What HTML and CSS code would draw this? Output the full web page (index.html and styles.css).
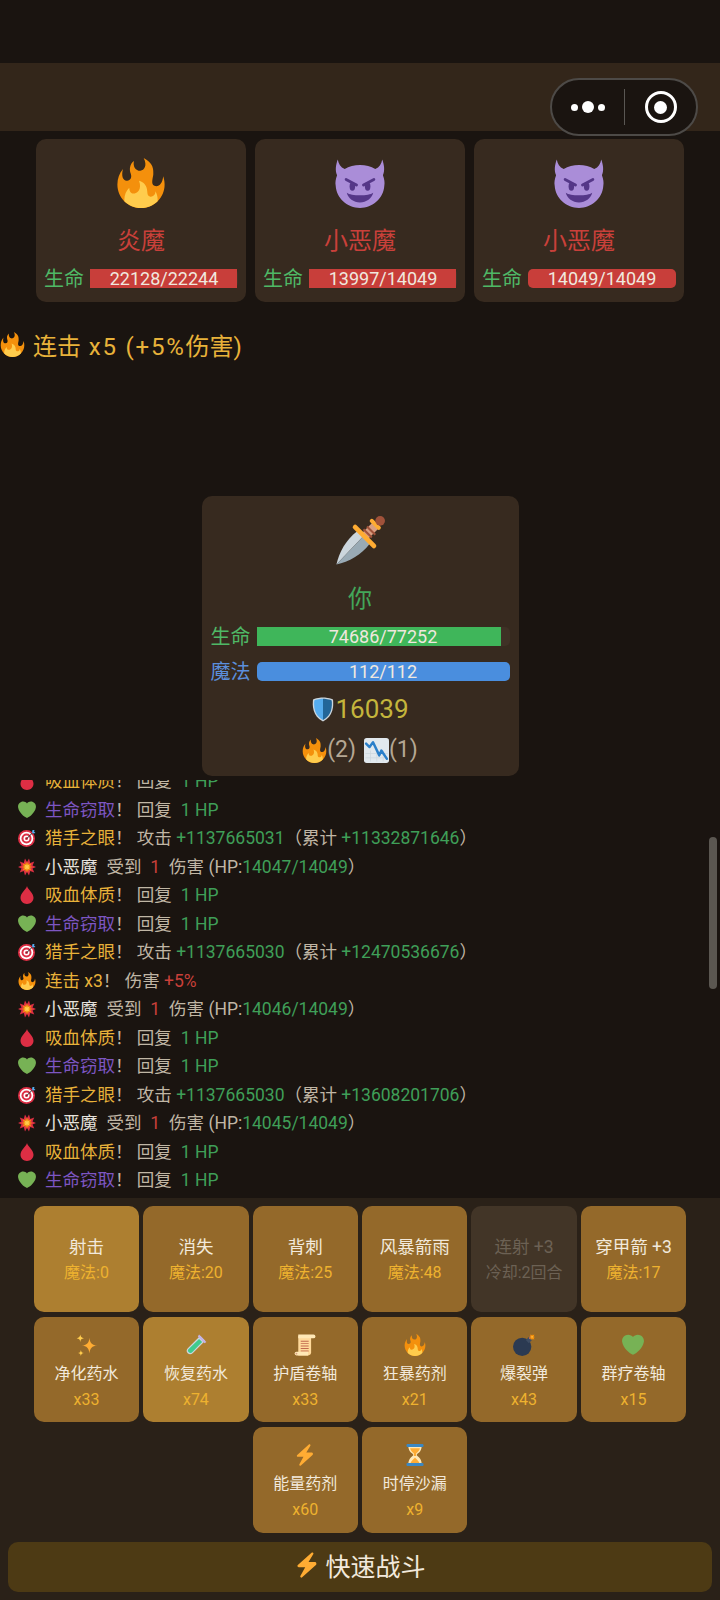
FILE: index.html
```html
<!DOCTYPE html>
<html lang="zh-CN">
<head>
    <meta charset="UTF-8">
    <meta name="viewport" content="width=device-width, initial-scale=1.0">
    <title>战斗</title>
    <link rel="stylesheet" href="styles.css">
</head>
<body>
    <!-- shared emoji drawings -->
    <svg class="defs" width="0" height="0">
        <symbol id="fire" viewBox="0 0 36 36">
            <path fill="#F4900C" d="M35 19c0-2.062-.367-4.039-1.040-5.868-.46 5.389-3.333 8.157-6.335 6.868-2.812-1.208-.917-5.917-.777-8.164.236-3.809-.012-8.169-6.931-11.794 2.875 5.500.333 8.917-2.333 9.125-2.958.231-5.667-2.542-4.667-7.042-3.238 2.386-3.332 6.402-2.333 9 1.042 2.708-.042 4.958-2.583 5.208-2.840.28-4.418-3.041-2.963-8.333C2.520 10.965 1 14.805 1 19c0 9.389 7.611 17 17 17s17-7.611 17-17z"/>
            <path fill="#FFCC4D" d="M28.394 23.999c.148 3.084-2.561 4.293-4.019 3.709-2.106-.843-1.541-2.291-2.083-5.291s-2.625-5.083-5.708-6c2.250 6.333-1.247 8.667-3.080 9.084-1.872.426-3.753-.001-3.968-4.007C7.352 23.668 6 26.676 6 30c0 .368.023.73.055 1.090C9.125 34.124 13.342 36 18 36s8.875-1.876 11.945-4.910c.032-.36.055-.722.055-1.090 0-2.187-.584-4.236-1.606-6.001z"/>
        </symbol>
        <symbol id="imp" viewBox="0 0 36 36">
            <path fill="#AA8DD8" d="M2 1c.5 3 2 5.500 5 7 3-2 7-3 11-3s8 1 11 3c3-1.500 4.500-4 5-7 1.500 4 2 8 .5 11.500 1 2.500 1.500 5.500 1 7.500-.5 9-8.500 16-17.500 16S1 29 .5 20c-.5-2 0-5 1-7.500C0 9 .5 5 2 1z"/>
            <path fill="none" stroke="#553788" stroke-width="2" stroke-linecap="round" d="M8 15.500l7.500 4M28 15.500l-7.500 4"/>
            <ellipse fill="#553788" cx="12.500" cy="20.500" rx="2" ry="3"/>
            <ellipse fill="#553788" cx="23.500" cy="20.500" rx="2" ry="3"/>
            <path fill="#553788" d="M8.500 25c3 2.500 16 2.500 19 0-.8 4-5 7-9.500 7s-8.700-3-9.500-7z"/>
        </symbol>
        <symbol id="dagger" viewBox="0 0 36 36">
            <path fill="#CCD6DD" d="M1 35C3 26 8 17 16 11l4 4z"/>
            <path fill="#99AAB5" d="M1 35C10 33 19 28 25 20l-5-5z"/>
            <path fill="none" stroke="#D99E82" stroke-width="6" d="M22 14l7-7"/>
            <path fill="none" stroke="#A0523A" stroke-width="1.500" d="M20.500 9.500l6 6M23 7.500l6 6"/>
            <path fill="none" stroke="#FFAC33" stroke-width="3" stroke-linecap="round" d="M26.500 3.500l5 5"/>
            <path fill="none" stroke="#FFAC33" stroke-width="3.500" stroke-linecap="round" d="M14.500 8L28 21.500"/>
            <circle fill="#A0523A" cx="32.500" cy="3.500" r="3.500"/>
        </symbol>
        <symbol id="shield" viewBox="0 0 36 36">
            <path fill="#CCD6DD" d="M33 3c-7-3-15-3-15-3S10 0 3 3C2 12 2 28 18 36 34 28 34 12 33 3z"/>
            <path fill="#55ACEE" d="M18 2S11 2 5 4.500C4 12 4.500 27 18 33.800z"/>
            <path fill="#226699" d="M18 2s7 0 13 2.500C32 12 31.500 27 18 33.800z"/>
        </symbol>
        <symbol id="chart" viewBox="0 0 36 36">
            <path fill="#E1E8ED" d="M36 32a4 4 0 0 1-4 4H4a4 4 0 0 1-4-4V4a4 4 0 0 1 4-4h28a4 4 0 0 1 4 4z"/>
            <path fill="#CCD6DD" d="M2 22h32v1H2zM2 28h32v1H2zM9 18h1v16H9zM18 18h1v16h-1zM27 18h1v16h-1z"/>
            <path fill="none" stroke="#2A7FC9" stroke-width="3.500" stroke-linejoin="round" stroke-linecap="round" d="M3 8l5 5 5-7 9 19 3-7 8 12"/>
        </symbol>
        <symbol id="heart" viewBox="0 0 36 36">
            <path fill="#77B255" d="M35.900 11.300C35.900 5.700 31.400 1.100 25.800 1.100c-3.200 0-6 1.500-7.800 3.800-1.800-2.300-4.600-3.800-7.800-3.800C4.600 1.100.1 5.700.1 11.300c0 .8.100 1.500.3 2.300C1.800 22.400 11.500 31.700 18 34c6.500-2.300 16.200-11.600 17.600-20.400.2-.8.300-1.500.3-2.300z"/>
        </symbol>
        <symbol id="target" viewBox="0 0 36 36">
            <circle fill="#DD2E44" cx="17" cy="19" r="17"/>
            <circle fill="#FFF" cx="17" cy="19" r="13.500"/>
            <circle fill="#DD2E44" cx="17" cy="19" r="10"/>
            <circle fill="#FFF" cx="17" cy="19" r="6"/>
            <circle fill="#DD2E44" cx="17" cy="19" r="3"/>
            <path fill="#292F33" d="M16.200 19.500l14-14 1 1-14 14z"/>
            <path fill="#55ACEE" d="M29 2l-1 5 2 2 5-1-3-3 1-3z"/>
        </symbol>
        <symbol id="boom" viewBox="0 0 36 36">
            <path fill="#DD2E44" d="M36 18l-7-3 3.500-8-8 3L22 1l-4 7-4-7-2.500 9-8-3L7 15l-7 3 7 3-3.500 8 8-3L14 35l4-7 4 7 2.500-9 8 3L29 21z"/>
            <path fill="#F4900C" d="M30 18l-6-1.500 3-5.500-5.500 2L20 7l-2 5-2-5-1.500 6L9 11l3 5.500L6 18l6 1.500L9 25l5.500-2 1.500 6 2-5 2 5 1.500-6 5.500 2-3-5.500z"/>
            <path fill="#FFCC4D" d="M25 18l-4-1 2-4-4 2-1-4-1 4-4-2 2 4-4 1 4 1-2 4 4-2 1 4 1-4 4 2-2-4z"/>
        </symbol>
        <symbol id="drop" viewBox="0 0 36 36">
            <path fill="#DD2E44" d="M18 0c-1 6-13 14-13 23.500C5 30.400 11 36 18 36s13-5.600 13-12.500C31 14 19 6 18 0z"/>
        </symbol>
        <symbol id="sparkles" viewBox="0 0 36 36">
            <path fill="#FFAC33" d="M22 6c1 9 4 12 13 13-9 1-12 4-13 13-1-9-4-12-13-13 9-1 12-4 13-13z"/>
            <path fill="#FFCC4D" d="M7 1c.6 4 2 5.400 6 6-4 .6-5.400 2-6 6-.6-4-2-5.400-6-6 4-.6 5.400-2 6-6zM8 26c.5 3.300 1.700 4.500 5 5-3.300.5-4.500 1.700-5 5-.5-3.300-1.700-4.500-5-5 3.300-.5 4.500-1.700 5-5z"/>
        </symbol>
        <symbol id="tube" viewBox="0 0 36 36">
            <path fill="#CCD6DD" d="M25 3l8 8L13 31c-3 3-6 3-8.500.5S2 26 5 23z"/>
            <path fill="#3FCB8E" d="M23 8l5 5L12.500 29c-2.500 2.500-4.500 2.500-6.500.5s-1.500-4 .5-5.500z"/>
            <path fill="#C4B2E6" d="M23 1l12 12-3 2L21 4z"/>
        </symbol>
        <symbol id="scroll" viewBox="0 0 36 36">
            <path fill="#FFD99A" d="M7 3h21v27a5 5 0 0 1-5 5H7z"/>
            <path fill="#FFE8B6" d="M7 1h25a3 3 0 0 1 0 6H7z"/>
            <path fill="#C1694F" d="M11 11h13v1.500H11zm0 4h13v1.500H11zm0 4h13v1.500H11zm0 4h13v1.500H11zm0 4h13v1.500H11z"/>
            <path fill="#FFE8B6" d="M4 29h19v6H4a3 3 0 0 1 0-6z"/>
            <circle fill="#D99E82" cx="4" cy="32" r="1.500"/>
        </symbol>
        <symbol id="bomb" viewBox="0 0 36 36">
            <circle fill="#2B3A52" cx="15" cy="21" r="15"/>
            <path fill="#3D4C63" d="M21 10l5-5 5 5-5 5z"/>
            <path fill="none" stroke="#C1694F" stroke-width="2" d="M27 8c0-2 1-4 3-5"/>
            <path fill="#F4900C" d="M31 0l1 2 3-1-1 3 2 1-2 1 1 3-3-1-1 2-1-2-2 1 1-3-2-1 2-1-1-3 3 1z"/>
            <path fill="#FFCC4D" d="M31 3l1 1 1 1-1 .5-1 1-.5-1-1-.5 1-1z"/>
        </symbol>
        <symbol id="bolt" viewBox="0 0 36 36">
            <path fill="#FFAC33" d="M30.900 15.100c-.3-.7-1-1.100-1.700-1.100H20.100L26.800 2.900c.4-.7.200-1.500-.4-2-.6-.5-1.500-.5-2.100 0l-19 17c-.6.500-.8 1.300-.6 2 .3.700 1 1.100 1.700 1.100h9.100L8.800 33.100c-.4.700-.2 1.500.4 2 .3.300.7.400 1.100.4.400 0 .7-.1 1-.4l19-17c.6-.5.800-1.300.6-2z"/>
        </symbol>
        <symbol id="hourglass" viewBox="0 0 36 36">
            <path fill="#FFE8B6" d="M21 18c0-2.100 3.500-2.800 5.500-6 2-3.400 2.500-7 2.500-9H7c0 2 .5 5.600 2.500 9 2 3.200 5.500 3.900 5.500 6s-3.500 2.800-5.500 6C7.500 27.400 7 31 7 33h22c0-2-.5-5.600-2.500-9-2-3.200-5.500-3.900-5.500-6z"/>
            <path fill="#FFAC33" d="M10 7h16c-.5 3-3 6.500-6 8v4.500h-4V15c-3-1.500-5.500-5-6-8zM18 22c-2 3-6.500 5-8 11h16c-1.500-6-6-8-8-11z"/>
            <path fill="#3B88C3" d="M6 0h24a2 2 0 0 1 2 2v1a2 2 0 0 1-2 2H6a2 2 0 0 1-2-2V2a2 2 0 0 1 2-2zM6 31h24a2 2 0 0 1 2 2v1a2 2 0 0 1-2 2H6a2 2 0 0 1-2-2v-1a2 2 0 0 1 2-2z"/>
        </symbol>
    </svg>

    <div class="page">
        <div class="status-bar"></div>
        <div class="top-bar">
            <div class="capsule">
                <div class="capsule-dots"><i></i><b></b><i></i></div>
                <div class="capsule-line"></div>
                <div class="capsule-target"><span></span></div>
            </div>
        </div>

        <div class="enemies">
            <div class="unit enemy">
                <svg class="avatar"><use href="#fire"/></svg>
                <div class="unit-name red">炎魔</div>
                <div class="stat">
                    <span class="stat-label green">生命</span>
                    <div class="bar"><div class="fill fill-red" style="width: 99.5%"></div><span>22128/22244</span></div>
                </div>
            </div>
            <div class="unit enemy">
                <svg class="avatar"><use href="#imp"/></svg>
                <div class="unit-name red">小恶魔</div>
                <div class="stat">
                    <span class="stat-label green">生命</span>
                    <div class="bar"><div class="fill fill-red" style="width: 99.6%"></div><span>13997/14049</span></div>
                </div>
            </div>
            <div class="unit enemy">
                <svg class="avatar"><use href="#imp"/></svg>
                <div class="unit-name red">小恶魔</div>
                <div class="stat">
                    <span class="stat-label green">生命</span>
                    <div class="bar"><div class="fill fill-red full" style="width: 100%"></div><span>14049/14049</span></div>
                </div>
            </div>
        </div>

        <div class="combo"><svg class="combo-icon"><use href="#fire"/></svg><span>连击<span class="combo-num"> x5 (+5%</span>伤害)</span></div>

        <div class="player-wrap">
            <div class="unit player">
                <svg class="avatar"><use href="#dagger"/></svg>
                <div class="unit-name green">你</div>
                <div class="stat">
                    <span class="stat-label green">生命</span>
                    <div class="bar"><div class="fill fill-green" style="width: 96.7%"></div><span>74686/77252</span></div>
                </div>
                <div class="stat">
                    <span class="stat-label blue">魔法</span>
                    <div class="bar"><div class="fill fill-blue full" style="width: 100%"></div><span>112/112</span></div>
                </div>
                <div class="armor"><svg class="armor-icon"><use href="#shield"/></svg>16039</div>
                <div class="buffs">
                    <svg class="buff-icon"><use href="#fire"/></svg><span>(2)</span>
                    <svg class="buff-icon second"><use href="#chart"/></svg><span>(1)</span>
                </div>
            </div>
        </div>

        <div class="log">
            <div class="log-inner">
                <div class="log-line"><svg class="log-icon"><use href="#drop"/></svg><span class="gold">吸血体质</span>！ 回复&ensp;<span class="green">1 HP</span></div>
                <div class="log-line"><svg class="log-icon"><use href="#heart"/></svg><span class="purple">生命窃取</span>！ 回复&ensp;<span class="green">1 HP</span></div>
                <div class="log-line"><svg class="log-icon"><use href="#target"/></svg><span class="gold">猎手之眼</span>！ 攻击 <span class="green">+1137665031</span>（累计 <span class="green">+11332871646</span>）</div>
                <div class="log-line"><svg class="log-icon"><use href="#boom"/></svg><span class="white">小恶魔</span>&ensp;受到&ensp;<span class="red">1</span>&ensp;伤害 (HP:<span class="green">14047/14049</span>）</div>
                <div class="log-line"><svg class="log-icon"><use href="#drop"/></svg><span class="gold">吸血体质</span>！ 回复&ensp;<span class="green">1 HP</span></div>
                <div class="log-line"><svg class="log-icon"><use href="#heart"/></svg><span class="purple">生命窃取</span>！ 回复&ensp;<span class="green">1 HP</span></div>
                <div class="log-line"><svg class="log-icon"><use href="#target"/></svg><span class="gold">猎手之眼</span>！ 攻击 <span class="green">+1137665030</span>（累计 <span class="green">+12470536676</span>）</div>
                <div class="log-line"><svg class="log-icon"><use href="#fire"/></svg><span class="gold">连击 x3</span>！ 伤害 <span class="red">+5%</span></div>
                <div class="log-line"><svg class="log-icon"><use href="#boom"/></svg><span class="white">小恶魔</span>&ensp;受到&ensp;<span class="red">1</span>&ensp;伤害 (HP:<span class="green">14046/14049</span>）</div>
                <div class="log-line"><svg class="log-icon"><use href="#drop"/></svg><span class="gold">吸血体质</span>！ 回复&ensp;<span class="green">1 HP</span></div>
                <div class="log-line"><svg class="log-icon"><use href="#heart"/></svg><span class="purple">生命窃取</span>！ 回复&ensp;<span class="green">1 HP</span></div>
                <div class="log-line"><svg class="log-icon"><use href="#target"/></svg><span class="gold">猎手之眼</span>！ 攻击 <span class="green">+1137665030</span>（累计 <span class="green">+13608201706</span>）</div>
                <div class="log-line"><svg class="log-icon"><use href="#boom"/></svg><span class="white">小恶魔</span>&ensp;受到&ensp;<span class="red">1</span>&ensp;伤害 (HP:<span class="green">14045/14049</span>）</div>
                <div class="log-line"><svg class="log-icon"><use href="#drop"/></svg><span class="gold">吸血体质</span>！ 回复&ensp;<span class="green">1 HP</span></div>
                <div class="log-line"><svg class="log-icon"><use href="#heart"/></svg><span class="purple">生命窃取</span>！ 回复&ensp;<span class="green">1 HP</span></div>
            </div>
            <div class="scroll-thumb"></div>
        </div>

        <div class="panel">
            <div class="actions">
                <div class="action bright"><div class="action-name">射击</div><div class="action-sub">魔法:0</div></div>
                <div class="action"><div class="action-name">消失</div><div class="action-sub">魔法:20</div></div>
                <div class="action"><div class="action-name">背刺</div><div class="action-sub">魔法:25</div></div>
                <div class="action"><div class="action-name">风暴箭雨</div><div class="action-sub">魔法:48</div></div>
                <div class="action disabled"><div class="action-name">连射 +3</div><div class="action-sub">冷却:2回合</div></div>
                <div class="action"><div class="action-name">穿甲箭 +3</div><div class="action-sub">魔法:17</div></div>

                <div class="action item"><svg class="item-icon"><use href="#sparkles"/></svg><div class="item-name">净化药水</div><div class="action-sub">x33</div></div>
                <div class="action item bright"><svg class="item-icon"><use href="#tube"/></svg><div class="item-name">恢复药水</div><div class="action-sub">x74</div></div>
                <div class="action item"><svg class="item-icon"><use href="#scroll"/></svg><div class="item-name">护盾卷轴</div><div class="action-sub">x33</div></div>
                <div class="action item"><svg class="item-icon"><use href="#fire"/></svg><div class="item-name">狂暴药剂</div><div class="action-sub">x21</div></div>
                <div class="action item"><svg class="item-icon"><use href="#bomb"/></svg><div class="item-name">爆裂弹</div><div class="action-sub">x43</div></div>
                <div class="action item"><svg class="item-icon"><use href="#heart"/></svg><div class="item-name">群疗卷轴</div><div class="action-sub">x15</div></div>
                <div class="action item"><svg class="item-icon"><use href="#bolt"/></svg><div class="item-name">能量药剂</div><div class="action-sub">x60</div></div>
                <div class="action item"><svg class="item-icon"><use href="#hourglass"/></svg><div class="item-name">时停沙漏</div><div class="action-sub">x9</div></div>
            </div>
            <div class="quick"><svg class="quick-icon"><use href="#bolt"/></svg>快速战斗</div>
        </div>
    </div>
</body>
</html>
```

FILE: styles.css
```css
* {
    box-sizing: border-box;
}

body {
    margin: 0;
    background: #1a1410;
    font-family: Roboto, "Noto Sans CJK SC", sans-serif;
    color: #c0b6a5;
}

.defs {
    position: absolute;
}

.page {
    width: 720px;
    height: 1600px;
    overflow: hidden;
    display: flex;
    flex-direction: column;
}

.status-bar {
    height: 63px;
}

.top-bar {
    height: 68px;
    background: #33261a;
    position: relative;
}

/* wechat capsule sits over the bar */
.capsule {
    position: absolute;
    left: 550px;
    top: 15px;
    width: 148px;
    height: 58px;
    border: 2px solid #4d4a47;
    border-radius: 29px;
    background: #1a1410;
    display: flex;
    align-items: center;
}

.capsule-dots {
    width: 72px;
    display: flex;
    align-items: center;
    justify-content: center;
    gap: 4px;
}

.capsule-dots i {
    width: 7px;
    height: 7px;
    border-radius: 50%;
    background: #fff;
}

.capsule-dots b {
    width: 12px;
    height: 12px;
    border-radius: 50%;
    background: #fff;
}

.capsule-line {
    width: 1px;
    height: 36px;
    background: #5a5753;
}

.capsule-target {
    flex: 1;
    display: flex;
    align-items: center;
    justify-content: center;
}

.capsule-target span {
    width: 32px;
    height: 32px;
    border: 3.5px solid #fff;
    border-radius: 50%;
    display: flex;
    align-items: center;
    justify-content: center;
}

.capsule-target span::after {
    content: "";
    width: 13px;
    height: 13px;
    border-radius: 50%;
    background: #fff;
}

.enemies {
    display: flex;
    gap: 9px;
    padding: 8px 36px 0;
}

.unit {
    background: #372a1f;
    border-radius: 10px;
    display: flex;
    flex-direction: column;
    align-items: center;
}

.enemy {
    flex: 1;
    height: 163px;
    padding: 19px 8px 0;
}

.enemy .stat {
    margin-top: 7px;
}

.avatar {
    width: 50px;
    height: 50px;
}

.unit-name {
    font-size: 24px;
    line-height: 34px;
    margin-top: 16px;
}

.red { color: #c9403a; }
.green { color: #3f9f58; }
.blue { color: #5b8fdc; }
.gold { color: #e8b23a; }
.purple { color: #7d56c2; }
.white { color: #e6e2dc; }

.stat {
    width: 100%;
    display: flex;
    align-items: center;
    gap: 6px;
}

.stat-label {
    font-size: 20px;
    line-height: 26px;
    white-space: nowrap;
    position: relative;
    top: 1px;
}

.stat-label.green {
    color: #4fb866;
}

.unit-name.green {
    color: #43a65a;
}

.bar {
    flex: 1;
    height: 19px;
    position: relative;
    background: #3f3126;
    border-radius: 5px;
}

.fill {
    height: 100%;
}

.fill.full {
    border-radius: 5px;
}

.fill-red { background: #c83e3a; }
.fill-green { background: #3fb65a; }
.fill-blue { background: #4a8ede; }

.bar span {
    position: absolute;
    inset: 0;
    text-align: center;
    font-size: 18px;
    line-height: 20px;
    color: #f0e8df;
}

.combo {
    display: flex;
    align-items: center;
    height: 34px;
    margin-top: 25px;
    font-size: 24px;
    color: #e8b23a;
}

.combo-num {
    letter-spacing: 1.8px;
}

.combo-icon {
    width: 25px;
    height: 25px;
    margin-right: 8px;
}

.player-wrap {
    display: flex;
    justify-content: center;
    margin-top: 135px;
}

.player {
    width: 317px;
    height: 280px;
    padding: 20px 9px 0;
}

.player .unit-name {
    margin-top: 16px;
}

.player .stat {
    margin-top: 7px;
}

.player .stat + .stat {
    margin-top: 9px;
}

.armor {
    display: flex;
    align-items: center;
    font-size: 26px;
    line-height: 36px;
    margin-top: 7px;
    color: #c4b53c;
}

.armor-icon {
    width: 24px;
    height: 25px;
}

.buffs {
    display: flex;
    align-items: center;
    font-size: 23px;
    line-height: 36px;
    margin-top: 5px;
    color: #b5a793;
}

.buff-icon {
    width: 25px;
    height: 25px;
}

.buff-icon.second {
    margin-left: 8px;
}

.log {
    flex: 1;
    min-height: 0;
    position: relative;
    overflow: hidden;
    margin-top: 4px;
}

.log-inner {
    margin-top: -13px;
    padding-left: 18px;
}

.log-line {
    height: 28.5px;
    line-height: 28.5px;
    font-size: 17.5px;
    white-space: pre;
}

.log-icon {
    width: 18px;
    height: 18px;
    margin-right: 9px;
    vertical-align: -3px;
}

.scroll-thumb {
    position: absolute;
    left: 709px;
    top: 57px;
    width: 8px;
    height: 152px;
    border-radius: 4px;
    background: #5b5751;
}

.panel {
    height: 402px;
    background: #2a2118;
    padding: 8px 8px 8px;
    display: flex;
    flex-direction: column;
}

.actions {
    display: flex;
    flex-wrap: wrap;
    justify-content: center;
    gap: 5px 3.8px;
    padding: 0 25px;
}

.action {
    width: 105.6px;
    height: 105.5px;
    background: #94692a;
    border-radius: 10px;
    display: flex;
    flex-direction: column;
    align-items: center;
    padding-top: 28px;
}

.action.bright {
    background: #ad7f30;
}

.action.disabled {
    background: #423527;
}

.action-name {
    font-size: 17.5px;
    line-height: 26px;
    color: #f2e9dc;
    white-space: nowrap;
}

.action-sub {
    font-size: 16px;
    line-height: 26px;
    color: #eeb22f;
    white-space: nowrap;
}

.disabled .action-name,
.disabled .action-sub {
    color: #6c6154;
}

.item {
    padding-top: 17px;
}

.item-icon {
    width: 22px;
    height: 22px;
}

.item-name {
    font-size: 16px;
    line-height: 26px;
    margin-top: 5px;
    color: #f2e9dc;
    white-space: nowrap;
}

.item .action-sub {
    margin-top: 0;
}

.quick {
    margin-top: 9px;
    height: 51px;
    padding-bottom: 3px;
    border-radius: 10px;
    background: #4d3a14;
    display: flex;
    align-items: center;
    justify-content: center;
    gap: 5px;
    font-size: 25px;
    color: #f2e9dc;
}

.quick-icon {
    width: 26px;
    height: 26px;
}
```
